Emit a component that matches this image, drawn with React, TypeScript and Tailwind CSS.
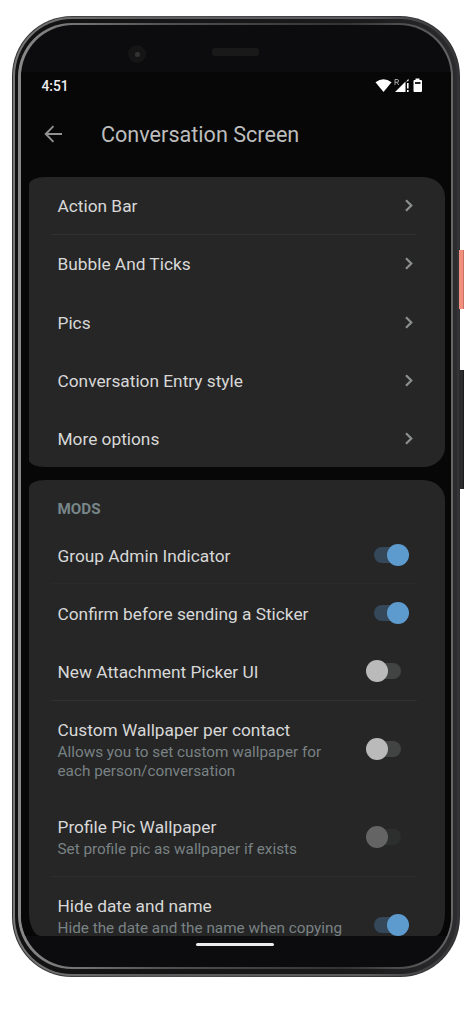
import React from "react";

function Toggle({ on = false, dim = false }: { on?: boolean; dim?: boolean }) {
  if (on) {
    return (
      <span className="mr-[9px] flex h-[22px] w-[34px] shrink-0 items-center">
        <span className="h-4 w-[29px] shrink-0 rounded-full bg-[#35485a]" />
        <span className="relative -ml-4 size-[22px] shrink-0 rounded-full bg-[#5d9bce]" />
      </span>
    );
  }
  return (
    <span className="mr-[16px] flex h-[22px] w-[35px] shrink-0 items-center">
      <span className={"relative size-[22px] shrink-0 rounded-full " + (dim ? "bg-[#646464]" : "bg-[#bababa]")} />
      <span className={"-ml-4 h-4 w-[29px] shrink-0 rounded-full " + (dim ? "bg-[#2d2f2f]" : "bg-[#424444]")} />
    </span>
  );
}

const links = ["Action Bar", "Bubble And Ticks", "Pics", "Conversation Entry style", "More options"];

type Mod = { title: string; lines?: string[]; on?: boolean; dim?: boolean; size: string; line: string };

const mods: Mod[] = [
  { title: "Group Admin Indicator", on: true, size: "h-[58px] items-center", line: "border-[#292a2a]" },
  { title: "Confirm before sending a Sticker", on: true, size: "h-[58px] items-center", line: "border-transparent" },
  { title: "New Attachment Picker UI", size: "h-[59px] items-center", line: "border-[#303131]" },
  {
    title: "Custom Wallpaper per contact",
    lines: ["Allows you to set custom wallpaper for", "each person/conversation"],
    size: "h-[97px] items-center",
    line: "border-transparent",
  },
  { title: "Profile Pic Wallpaper", lines: ["Set profile pic as wallpaper if exists"], dim: true, size: "h-[79px] items-center", line: "border-[#2d2e2e]" },
  { title: "Hide date and name", lines: ["Hide the date and the name when copying"], on: true, size: "h-[97px] items-center", line: "border-transparent" },
];

function StatusIcons() {
  return (
    <svg className="-mt-[2px]" width="48" height="16" viewBox="0 0 48 16" fill="#fff">
      <path d="M0.500 4.200Q8.500-1.800 16.500 4.200L8.500 14Z" />
      <path d="M20 14L30.500 3.500V14ZM32 5h1.600v5.500H32zM32 12h1.600v2H32z" />
      <path d="M33.500 0.800V3L31 3.800Z" />
      <path d="M40.500 0.500h4V2H46q1 0 1 1V13q0 1-1 1h-6.500q-1 0-1-1V3q0-1 1-1h1z" />
      <path d="M40 4h5.500v2H40z" fill="#222" />
      <path d="M20 7V1.500h2.200q1.300 0 1.300 1.400t-1.300 1.400H20M22 4.300L23.700 7" fill="none" stroke="#b5b5b5" strokeWidth="0.900" />
    </svg>
  );
}

export default function App() {
  return (
    <div className="flex h-[1024px] w-[474px] overflow-hidden bg-white pl-3 pt-4 font-['Roboto',sans-serif]">
      <div className="h-[961px] w-[448px] shrink-0 rounded-[60px] bg-[linear-gradient(90deg,#333,#505052_30%,#303032)] p-px">
        <div className="h-full rounded-[59px] bg-[linear-gradient(90deg,#777,#5c5c5e_30%,#5c5c5e_80%,#343436)] p-[2px]">
          <div className="h-full rounded-[57px] bg-[linear-gradient(90deg,#111,#1b1b1c_80%,#2c2c2e)] pb-[5px] pl-[3px] pr-[4px] pt-[4px]">
            <div className="h-full rounded-[54px] bg-[linear-gradient(90deg,#8a8a8a,#505052_35%,#333_75%,#666)] pb-[2px] pl-[3px] pr-[2px] pt-[2px]">
              <div className="flex h-full flex-col overflow-hidden rounded-[52px] bg-[#0c0c0e]">
                <div className="flex h-[47px] shrink-0 pt-[20px]">
                  <div className="ml-[107px] flex size-[18px] items-center justify-center rounded-full bg-[#151515]">
                    <span className="size-[5px] rounded-full bg-[#343434]" />
                  </div>
                  <div className="ml-[66px] mt-[3px] h-[8px] w-[47px] rounded-[3px] bg-[#191919]" />
                </div>
                <div className="flex h-[864px] shrink-0 flex-col overflow-hidden bg-[#070707] pl-[8px] pr-[6px]">
                  <div className="flex h-[29px] shrink-0 items-center justify-between pl-[12.500px] pr-[22px]">
                    <span className="-mt-[2px] text-[13.800px] font-medium leading-5 text-[#eee]">4:51</span>
                    <StatusIcons />
                  </div>
                  <div className="flex h-[76px] shrink-0 items-center pb-[10px] pl-[15px]">
                    <svg className="-mt-px" width="19" height="18" viewBox="0 0 19 18" fill="none" stroke="#929292" strokeWidth="1.900">
                      <path d="M18 9H2M9.500 1.200L1.700 9l7.800 7.800" />
                    </svg>
                    <h1 className="ml-[38px] pt-px text-[21.600px] leading-7 text-[#bdbdbd]">Conversation Screen</h1>
                  </div>
                  <div className="h-[290px] shrink-0 overflow-hidden rounded-[16px_22px_22px_16px/8px_20px_20px_7px] bg-[#262626]">
                    {links.map((label, i) => (
                      <div
                        key={label}
                        className={
                          "ml-[22px] mr-[28px] flex h-[58.250px] items-center justify-between border-b pl-[6.500px] pr-[4px] " +
                          (i === 0 ? "border-[#303131]" : "border-transparent")
                        }
                      >
                        <span className="pt-[3px] text-[17.300px] text-[#d8d8d8]">{label}</span>
                        <svg width="8" height="13" viewBox="0 0 8 13" fill="none" stroke="#8b8f8f" strokeWidth="2.200">
                          <path d="M1 1.200L6.300 6.500 1 11.800" />
                        </svg>
                      </div>
                    ))}
                  </div>
                  <div className="mt-[13px] h-[456px] shrink-0 overflow-hidden rounded-[16px_22px_10px_12px/8px_20px_24px_24px] bg-[#262626]">
                    <h2 className="h-[46px] pl-[28.500px] pt-[19px] text-[15.200px] font-bold leading-[20px] text-[#78868a]">MODS</h2>
                    {mods.map((mod) => (
                      <div key={mod.title} className={"ml-[22px] mr-[28px] flex justify-between border-b " + mod.size + " " + mod.line}>
                        <div className={"whitespace-nowrap pl-[6.500px] " + (mod.lines ? "self-start pt-[18px]" : "pt-[2px]")}>
                          <div className="text-[17.300px] leading-[22px] text-[#d8d8d8]">{mod.title}</div>
                          {mod.lines && (
                            <div className="mt-[2px] text-[15.300px] leading-[18.500px] text-[#798284]">
                              {mod.lines.map((line) => (
                                <div key={line}>{line}</div>
                              ))}
                            </div>
                          )}
                        </div>
                        <Toggle on={mod.on} dim={mod.dim} />
                      </div>
                    ))}
                  </div>
                </div>
                <div className="ml-[175px] mt-[7px] h-[3px] w-[78px] shrink-0 rounded-full bg-[#ececec]" />
              </div>
            </div>
          </div>
        </div>
      </div>
      <div className="-ml-px flex flex-col pt-[234px]">
        <div className="h-[59px] w-[5px] border-r border-[#c97465] bg-[#f28f7f]" />
        <div className="mt-[61px] h-[119px] w-[5px] border-r border-[#1c1c1d] bg-[#2b2b2d]" />
      </div>
    </div>
  );
}
